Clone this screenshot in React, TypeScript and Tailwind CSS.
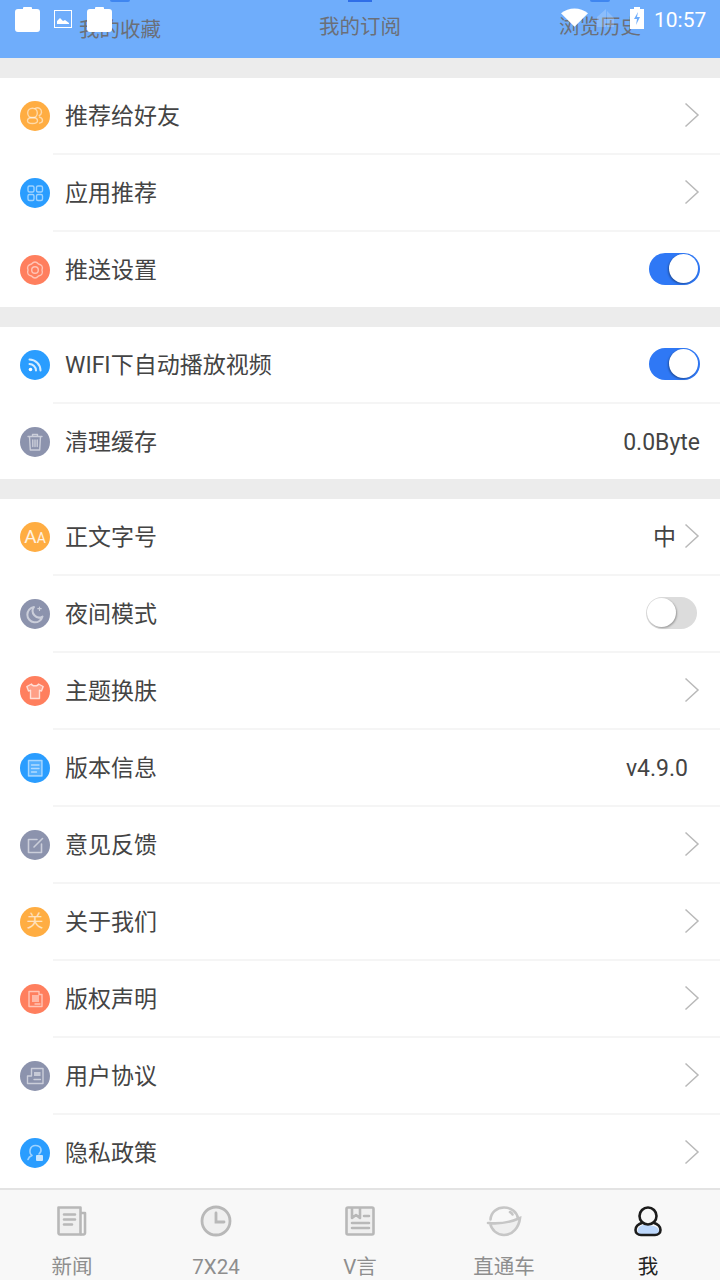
import type { ReactNode } from "react";

type Row = {
  label: string;
  color: string;
  icon: ReactNode;
  right?: ReactNode;
  last?: boolean;
};

const orange = "bg-[#ffad42]";
const blue = "bg-[#2a9dff]";
const coral = "bg-[#ff7f5e]";
const slate = "bg-[#8c93ad]";

const Glyph = ({ children }: { children: ReactNode }) => (
  <svg viewBox="0 0 30 30" className="h-[30px] w-[30px]" fill="none" stroke="#fff" strokeOpacity={0.55} strokeWidth={1.4} strokeLinecap="round" strokeLinejoin="round">
    {children}
  </svg>
);

const Chevron = () => (
  <svg viewBox="0 0 16 26" className="mb-[2px] h-[26px] w-4" fill="none" stroke="#b9b9b9" strokeWidth={1.5}>
    <path d="M1.500 1.500 14 13 1.500 24.500" />
  </svg>
);

const Toggle = ({ on }: { on: boolean }) =>
  on ? (
    <div className="mb-[2px] flex h-8 w-[51px] items-center justify-end rounded-full bg-[#2f78f5] pr-[2px]">
      <div className="h-[29px] w-[29px] rounded-full bg-white shadow-[-1px_1px_2px_rgba(0,0,0,0.35)]" />
    </div>
  ) : (
    <div className="mb-[2px] mr-[3px] flex h-8 w-[51px] items-center rounded-full bg-[#dcdcdc] pl-[1px]">
      <div className="h-[29px] w-[29px] rounded-full bg-white shadow-[1px_1px_2px_rgba(0,0,0,0.3)]" />
    </div>
  );

const Value = ({ children, extra = "" }: { children: ReactNode; extra?: string }) => (
  <span className={`mt-1 text-[23px] text-[#444] ${extra}`}>{children}</span>
);

const sections: Row[][] = [
  [
    {
      label: "推荐给好友",
      color: orange,
      right: <Chevron />,
      icon: (
        <Glyph>
          <circle cx="12.500" cy="12" r="4.800" />
          <path d="M15 7.500c3.200-1.800 6.800.3 6.500 3.800-.2 1.600-1 2.800-2.300 3.400M7.500 19.800c0-2.200 2.300-3.300 5-3.300s5 1.100 5 3.300-2.300 2.700-5 2.700-5-.5-5-2.700ZM19.500 16.200c1.800.5 3 1.700 3 3.300s-1.200 2.300-3 2.600" />
        </Glyph>
      ),
    },
    {
      label: "应用推荐",
      color: blue,
      right: <Chevron />,
      icon: (
        <Glyph>
          <rect x="8" y="8" width="6" height="6" rx="1.500" />
          <rect x="16.500" y="8" width="6" height="6" rx="1.500" />
          <rect x="8" y="16.500" width="6" height="6" rx="1.500" />
          <rect x="16.500" y="16.500" width="6" height="6" rx="1.500" />
        </Glyph>
      ),
    },
    {
      label: "推送设置",
      color: coral,
      right: <Toggle on />,
      last: true,
      icon: (
        <Glyph>
          <path d="M22 15Q23.660 20 18.500 21.060 15 25 11.500 21.060 6.340 20 8 15 6.340 10 11.500 8.940 15 5 18.500 8.940 23.660 10 22 15Z" />
          <circle cx="15" cy="15" r="3.300" />
        </Glyph>
      ),
    },
  ],
  [
    {
      label: "WIFI下自动播放视频",
      color: blue,
      right: <Toggle on />,
      icon: (
        <svg viewBox="0 0 30 30" className="h-[30px] w-[30px]" fill="none" stroke="#fff" strokeOpacity={0.8} strokeWidth={2} strokeLinecap="round">
          <circle cx="10.500" cy="19.500" r="1.800" fill="#fff" stroke="none" />
          <path d="M9.500 14c3.500 0 6.500 3 6.500 6.500M9.500 9.500c6 0 11 5 11 11" />
        </svg>
      ),
    },
    {
      label: "清理缓存",
      color: slate,
      last: true,
      right: <Value>0.0Byte</Value>,
      icon: (
        <Glyph>
          <path d="M8 9.500h14M12.500 9.500V7.500h5v2M9.500 9.500l.8 13.500h9.400l.8-13.500" />
          <path d="M12.800 13v6.500M15 13v6.500M17.200 13v6.500" />
        </Glyph>
      ),
    },
  ],
  [
    {
      label: "正文字号",
      color: orange,
      right: (
        <div className="flex items-center gap-2">
          <Value>中</Value>
          <Chevron />
        </div>
      ),
      icon: (
        <div className="flex items-baseline text-white/85">
          <span className="text-[19px] leading-none">A</span>
          <span className="text-[14px] leading-none">A</span>
        </div>
      ),
    },
    {
      label: "夜间模式",
      color: slate,
      right: <Toggle on={false} />,
      icon: (
        <Glyph>
          <path d="M14 8a7.700 7.700 0 1 0 8.500 9.500 6.500 6.500 0 0 1-8.500-9.500Z" strokeWidth={2} />
          <path d="M19.500 8v3.400M17.800 9.700h3.400" strokeWidth={1.200} />
        </Glyph>
      ),
    },
    {
      label: "主题换肤",
      color: coral,
      right: <Chevron />,
      icon: (
        <svg viewBox="0 0 30 30" className="h-[30px] w-[30px]" fill="#fff" fillOpacity={0.25} stroke="#fff" strokeOpacity={0.7} strokeWidth={1.4} strokeLinejoin="round">
          <path d="M11.500 8 6.800 10.500l1.700 4.500 2-.7V22.500h9v-8.200l2 .7 1.700-4.500L18.500 8c-.5 2.300-6.500 2.300-7 0Z" />
        </svg>
      ),
    },
    {
      label: "版本信息",
      color: blue,
      right: <Value extra="mr-3">v4.9.0</Value>,
      icon: (
        <Glyph>
          <rect x="8.500" y="7.500" width="13.500" height="15.500" fill="#fff" fillOpacity={0.2} />
          <path d="M11.500 12h7.500M11.500 15.500h7.500M11.500 19h5" />
        </Glyph>
      ),
    },
    {
      label: "意见反馈",
      color: slate,
      right: <Chevron />,
      icon: (
        <Glyph>
          <path d="M21.500 14v8.500h-13v-13H17" strokeWidth={1.600} />
          <path d="m14 17 8.500-8.500" strokeWidth={1.600} />
        </Glyph>
      ),
    },
    {
      label: "关于我们",
      color: orange,
      right: <Chevron />,
      icon: <span className="text-[17px] leading-none text-white/65">关</span>,
    },
    {
      label: "版权声明",
      color: coral,
      right: <Chevron />,
      icon: (
        <Glyph>
          <path d="M9 7.500h10v3h3v12H9Z" />
          <rect x="12" y="11" width="7" height="7" fill="#fff" fillOpacity={0.45} stroke="none" />
          <path d="M15 20h5" />
        </Glyph>
      ),
    },
    {
      label: "用户协议",
      color: slate,
      right: <Chevron />,
      icon: (
        <Glyph>
          <path d="M11.500 15V7.500h11.500V22.500H7.500V15h4" />
          <rect x="14" y="11" width="6.500" height="4" fill="#fff" fillOpacity={0.5} stroke="none" />
          <path d="M14 18.500h6.500" />
        </Glyph>
      ),
    },
    {
      label: "隐私政策",
      color: blue,
      right: <Chevron />,
      last: true,
      icon: (
        <Glyph>
          <path d="M12 17.500c-3.500-2.500-2.500-10 3.500-10s7 5.500 3.500 8.500M12 17.500c-2 .8-3.500 2.200-4 4" strokeWidth={1.600} />
          <rect x="16" y="17" width="7" height="6" rx="1" fill="#fff" fillOpacity={0.75} stroke="none" />
        </Glyph>
      ),
    },
  ],
];

const tabs: { label: string; active?: boolean; icon: ReactNode }[] = [
  {
    label: "新闻",
    icon: (
      <svg viewBox="0 0 32 32" className="h-8 w-8" fill="none" stroke="#b8b8b8" strokeWidth={2.600} strokeLinejoin="round">
        <path d="M2.500 2.500h22v27H4a1.500 1.500 0 0 1-1.500-1.500Z" fill="#efefef" />
        <path d="M24.500 8h4.500v20a1.500 1.500 0 0 1-1.500 1.500h-3" />
        <path d="M8 9.500h11M8 14.500h11M8 19.500h8" strokeLinecap="round" />
      </svg>
    ),
  },
  {
    label: "7X24",
    icon: (
      <svg viewBox="0 0 32 32" className="h-8 w-8" fill="none" stroke="#b8b8b8" strokeWidth={2.800} strokeLinecap="round">
        <circle cx="16" cy="16" r="14" fill="#efefef" />
        <path d="M16 8v9h8" />
      </svg>
    ),
  },
  {
    label: "V言",
    icon: (
      <svg viewBox="0 0 32 32" className="h-8 w-8" fill="none" stroke="#b8b8b8" strokeWidth={2.600} strokeLinejoin="round">
        <rect x="2.500" y="2.500" width="27" height="27" rx="1.500" fill="#efefef" />
        <path d="M8 3v10l4-3 4 3V3" />
        <path d="M20 11h5M8 18h17M8 23h17" strokeLinecap="round" />
      </svg>
    ),
  },
  {
    label: "直通车",
    icon: (
      <svg viewBox="0 0 36 32" className="h-8 w-9" fill="none" stroke="#c6c6c6" strokeWidth={2.600} strokeLinecap="round">
        <path d="M4.500 14.500C5 7 11 2.500 18 2.500s13 4.500 14 11" />
        <path d="M2 18c10 1 22-.5 32-5-1 9-7 17-16 17-7 0-12.500-5-14-12" fill="#efefef" />
        <path d="M24 7c1 .5 2 1.500 2.500 2.500" />
      </svg>
    ),
  },
  {
    label: "我",
    active: true,
    icon: (
      <svg viewBox="0 0 32 32" className="h-8 w-8" fill="none" stroke="#1c1c1c" strokeWidth={2.600} strokeLinejoin="round">
        <path d="M6 24c1-3 5-5 10-4 6 1 10 1 11 6 0 2-1 4-4 4H9c-3 0-4-3-3-6Z" fill="#bcd7fb" stroke="none" />
        <circle cx="16" cy="11" r="8.500" />
        <path d="M11 17.500C6 19 3.500 22 3.500 25c0 3 2.500 5 5.500 5h14c3 0 5.500-2 5.500-5 0-3-2.500-6-7.500-7.500" />
      </svg>
    ),
  },
];

const Clip = ({ extra }: { extra: string }) => (
  <svg viewBox="0 0 25 25" className={`h-[25px] w-[25px] ${extra}`}>
    <path d="M3 2h5V1a1 1 0 0 1 1-1h7a1 1 0 0 1 1 1v1h5a3 3 0 0 1 3 3v17a3 3 0 0 1-3 3H3a3 3 0 0 1-3-3V5a3 3 0 0 1 3-3Z" fill="#fff" />
  </svg>
);

const SettingRow = ({ row }: { row: Row }) => (
  <>
    <div className="flex h-[75px] items-center pl-5 pr-5">
      <div className={`flex h-[30px] w-[30px] shrink-0 items-center justify-center rounded-full ${row.color}`}>{row.icon}</div>
      <span className="ml-[15px] mt-1 flex-1 text-[23px] text-[#444]">{row.label}</span>
      {row.right}
    </div>
    {!row.last && <div className="ml-[53px] h-[2px] bg-[#f5f5f5]" />}
  </>
);

export default function App() {
  return (
    <div className="relative flex h-[1280px] w-[720px] flex-col overflow-hidden bg-[#ececec] font-['Roboto','Noto_Sans_CJK_SC',sans-serif]">
      {/* header left over from the page behind, status bar on top of it */}
      <div className="grid h-[58px] shrink-0 grid-cols-3 bg-[#6fadfb] text-[20.5px] leading-[24px] text-[#6b6f78]">
        <div className="flex flex-col items-center">
          <div className="h-[2px] w-5 rounded-b bg-[#3f86f0]" />
          <span className="mt-[16px]">我的收藏</span>
        </div>
        <div className="flex flex-col items-center">
          <div className="h-[2px] w-6 bg-[#2f6ee8]" />
          <span className="mt-[13px]">我的订阅</span>
        </div>
        <div className="flex flex-col items-center">
          <div className="h-[2px] w-5 rounded-b bg-[#3f86f0]" />
          <span className="mt-[13px]">浏览历史</span>
        </div>
      </div>

      <div className="absolute inset-x-0 top-0 flex h-10 items-start text-white">
        <Clip extra="ml-[15px] mt-[7px]" />
        <svg viewBox="0 0 18 18" className="ml-[14px] mt-[10px] h-[18px] w-[18px]" fill="none" stroke="#fff">
          <rect x=".5" y=".5" width="17" height="17" />
          <path d="M3 14v-3l3-3 3 3 2-1 4 3v1Z" fill="#fff" stroke="none" />
        </svg>
        <Clip extra="ml-[15px] mt-[7px]" />
        <svg viewBox="0 0 28 19" className="ml-[449px] mt-[8px] h-[19px] w-[27px]">
          <path d="M0 5c8-6.500 20-6.500 28 0L14 19Z" fill="#fff" />
        </svg>
        <svg viewBox="0 0 17 18" className="ml-[9px] mt-[9px] h-[18px] w-[17px]">
          <path d="M0 8 9 0v18H0ZM10 2l7 7v9h-7Z" fill="#fff" fillOpacity={0.2} />
        </svg>
        <svg viewBox="0 0 14 22" className="ml-[16px] mt-[7px] h-[22px] w-[14px]">
          <path d="M4 0h6v2h4v20H0V2h4Z" fill="#fff" />
          <path d="M8 5 4 12h3l-1 6 4-8H7Z" fill="#6fadfb" />
        </svg>
        <span className="ml-[10px] mt-[8px] text-[21px] leading-[24px]">10:57</span>
      </div>

      <div className="min-h-0 flex-1 overflow-hidden pt-5">
        {sections.map((rows, i) => (
          <div key={i} className="mb-5 bg-white">
            {rows.map((row) => (
              <SettingRow key={row.label} row={row} />
            ))}
          </div>
        ))}
      </div>

      <div className="flex h-[92px] shrink-0 border-t-2 border-[#e3e3e3] bg-[#f8f8f8]">
        {tabs.map((tab) => (
          <div key={tab.label} className="flex flex-1 flex-col items-center pt-[15px]">
            <div className="flex h-8 items-center">{tab.icon}</div>
            <span className={`mt-[16px] text-[20.5px] leading-[28px] ${tab.active ? "text-[#222]" : "text-[#8e8e8e]"}`}>{tab.label}</span>
          </div>
        ))}
      </div>
    </div>
  );
}
